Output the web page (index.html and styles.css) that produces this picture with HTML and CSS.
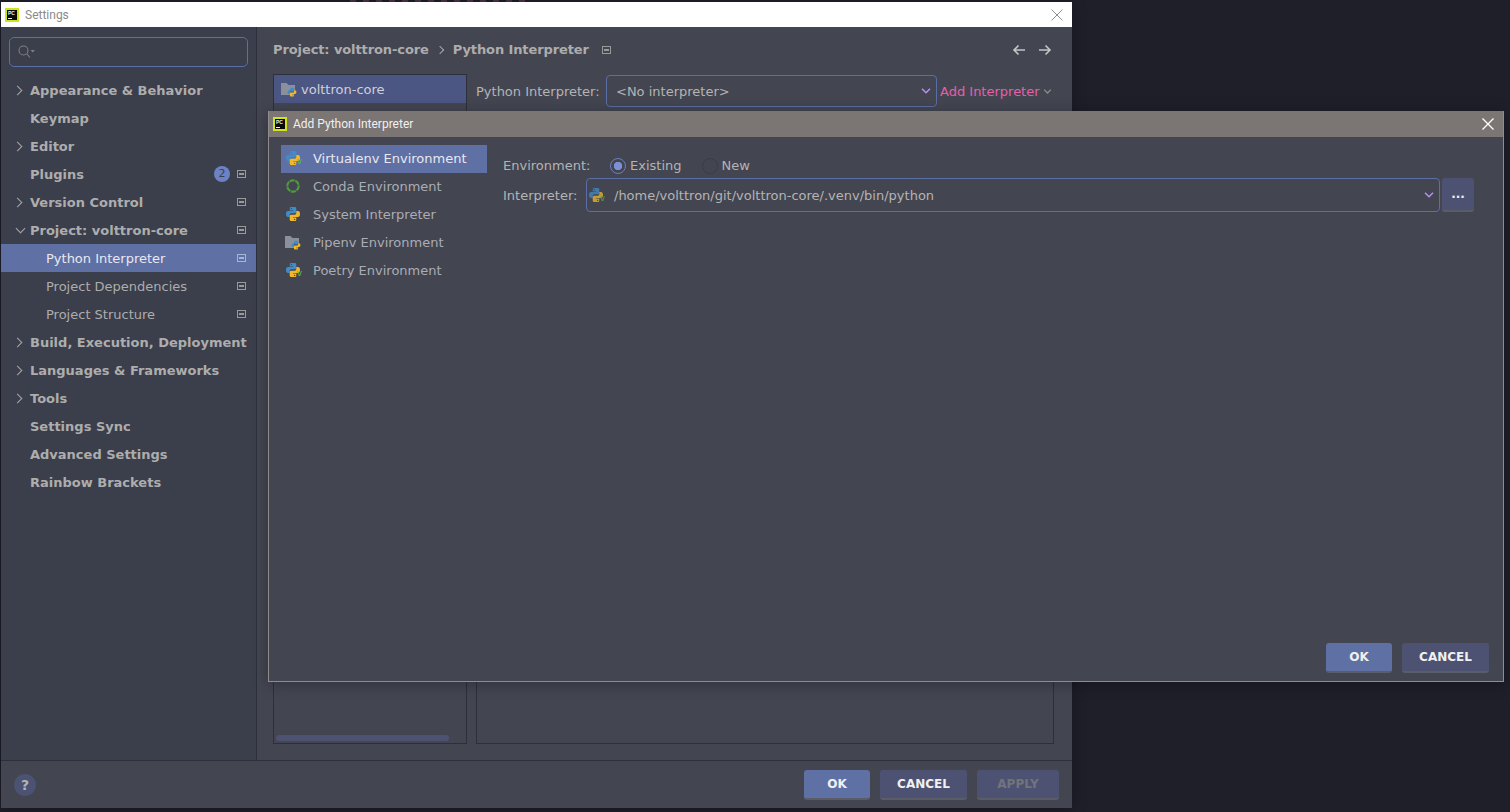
FILE: index.html
```html
<!DOCTYPE html>
<html lang="en">
<head>
    <meta charset="UTF-8">
    <meta name="viewport" content="width=device-width, initial-scale=1.0">
    <title>Settings</title>
    <link rel="stylesheet" href="styles.css">
</head>
<body>
    <svg class="defs" width="0" height="0">
        <symbol id="py" viewBox="0 0 16 16">
            <path id="snake" fill="#3e8cc8" fill-rule="evenodd" d="M6.200 1H9.800C10.700 1 11.300 1.600 11.300 2.500V5.900C11.300 6.700 10.700 7.300 9.900 7.300H6.300C5.400 7.300 4.700 8 4.700 8.900V11H3C1.700 11 1 9.700 1 8 1 6.300 1.700 5 3 5H8V4.400H4.700V2.500C4.700 1.500 5.300 1 6.200 1ZM6.400 1.900A.7 .7 0 1 0 6.410 3.300 .7 .7 0 1 0 6.400 1.900Z"/>
            <path fill="#f2b828" fill-rule="evenodd" transform="rotate(180 8 8)" d="M6.200 1H9.800C10.700 1 11.300 1.600 11.300 2.500V5.900C11.300 6.700 10.700 7.300 9.900 7.300H6.300C5.400 7.300 4.700 8 4.700 8.900V11H3C1.700 11 1 9.700 1 8 1 6.300 1.700 5 3 5H8V4.400H4.700V2.500C4.700 1.500 5.300 1 6.200 1ZM6.400 1.900A.7 .7 0 1 0 6.410 3.300 .7 .7 0 1 0 6.400 1.900Z"/>
        </symbol>
        <symbol id="pyfolder" viewBox="0 0 16 16">
            <path fill="#8a919c" d="M0 2H5.500L7.500 4H14V9H9V14H0Z"/>
            <use href="#py" x="6" y="6" width="10" height="10"/>
        </symbol>
        <symbol id="chevron" viewBox="0 0 10 6">
            <path fill="none" stroke="currentColor" stroke-width="1.500" d="M1 .8L5 4.800L9 .8"/>
        </symbol>
    </svg>

    <div class="bg-scrap"></div>

    <div class="window settings">
        <div class="titlebar light">
            <span class="app-icon"><span class="app-icon-text">PC</span></span>
            <span class="title-text">Settings</span>
            <svg class="close" viewBox="0 0 12 12"><path d="M.5 .5L11.500 11.500M11.500 .5L.5 11.500"/></svg>
        </div>
        <div class="settings-body">
            <aside class="sidebar">
                <div class="search">
                    <svg class="search-icon" viewBox="0 0 18 14"><circle cx="5.500" cy="5.500" r="4.500"/><path d="M9 9L12 12.500"/><path class="fill" d="M12.500 5H17L14.700 7.500Z"/></svg>
                </div>
                <ul class="nav">
                    <li class="nav-row"><span class="arrow right"></span>Appearance &amp; Behavior</li>
                    <li class="nav-row"><span class="arrow"></span>Keymap</li>
                    <li class="nav-row"><span class="arrow right"></span>Editor</li>
                    <li class="nav-row"><span class="arrow"></span>Plugins<span class="badge">2</span><span class="pin"></span></li>
                    <li class="nav-row"><span class="arrow right"></span>Version Control<span class="pin push"></span></li>
                    <li class="nav-row"><span class="arrow down"></span>Project: volttron-core<span class="pin push"></span></li>
                    <li class="nav-row sub selected">Python Interpreter<span class="pin push"></span></li>
                    <li class="nav-row sub">Project Dependencies<span class="pin push"></span></li>
                    <li class="nav-row sub">Project Structure<span class="pin push"></span></li>
                    <li class="nav-row"><span class="arrow right"></span>Build, Execution, Deployment</li>
                    <li class="nav-row"><span class="arrow right"></span>Languages &amp; Frameworks</li>
                    <li class="nav-row"><span class="arrow right"></span>Tools</li>
                    <li class="nav-row"><span class="arrow"></span>Settings Sync</li>
                    <li class="nav-row"><span class="arrow"></span>Advanced Settings</li>
                    <li class="nav-row"><span class="arrow"></span>Rainbow Brackets</li>
                </ul>
            </aside>
            <main class="content">
                <div class="crumbs">
                    <span>Project: volttron-core</span>
                    <span class="crumb-sep"></span>
                    <span>Python Interpreter</span>
                    <span class="pin"></span>
                    <svg class="nav-arrow first" viewBox="0 0 14 12"><path d="M13 6H2M6.500 1.500L2 6L6.500 10.500"/></svg>
                    <svg class="nav-arrow" viewBox="0 0 14 12"><path d="M1 6H12M7.500 1.500L12 6L7.500 10.500"/></svg>
                </div>
                <div class="panes">
                    <div class="tree">
                        <div class="tree-row"><svg class="icon"><use href="#pyfolder"/></svg>volttron-core</div>
                        <div class="tree-scroll"></div>
                    </div>
                    <div class="detail">
                        <div class="detail-top">
                            <span class="detail-label">Python Interpreter:</span>
                            <div class="combo"><span class="combo-text">&lt;No interpreter&gt;</span><svg class="chev"><use href="#chevron"/></svg></div>
                            <span class="add-link">Add Interpreter</span><svg class="chev grey"><use href="#chevron"/></svg>
                        </div>
                        <div class="detail-box"></div>
                    </div>
                </div>
            </main>
        </div>
        <div class="footer">
            <span class="help">?</span>
            <button class="btn primary">OK</button>
            <button class="btn cancel">CANCEL</button>
            <button class="btn disabled">APPLY</button>
        </div>
    </div>

    <div class="window dialog">
        <div class="titlebar taupe">
            <span class="app-icon"><span class="app-icon-text">PC</span></span>
            <span class="dialog-title">Add Python Interpreter</span>
            <svg class="close white" viewBox="0 0 12 12"><path d="M.5 .5L11.500 11.500M11.500 .5L.5 11.500"/></svg>
        </div>
        <div class="dialog-body">
            <ul class="env-list">
                <li class="env-row selected"><span class="icon-wrap"><svg class="icon"><use href="#py"/></svg><span class="v-mark">v</span></span>Virtualenv Environment</li>
                <li class="env-row">
                    <svg class="icon" viewBox="0 0 16 16"><circle cx="8" cy="8" r="5.700" fill="none" stroke="#4f9a3c" stroke-width="2.200" stroke-dasharray="5 .7"/></svg>Conda Environment</li>
                <li class="env-row"><svg class="icon"><use href="#py"/></svg>System Interpreter</li>
                <li class="env-row"><svg class="icon"><use href="#pyfolder"/></svg>Pipenv Environment</li>
                <li class="env-row"><span class="icon-wrap"><svg class="icon"><use href="#py"/></svg><span class="v-mark">v</span></span>Poetry Environment</li>
            </ul>
            <div class="env-form">
                <div class="form-row env-choice">
                    <span class="form-label">Environment:</span>
                    <span class="radio checked"></span><span class="radio-text">Existing</span>
                    <span class="radio"></span><span class="radio-text">New</span>
                </div>
                <div class="form-row">
                    <span class="form-label interp">Interpreter:</span>
                    <div class="combo path">
                        <span class="icon-wrap dim"><svg class="icon"><use href="#py"/></svg><span class="v-mark">v</span></span>
                        <span class="path-text">/home/volttron/git/volttron-core/.venv/bin/python</span>
                        <svg class="chev"><use href="#chevron"/></svg>
                    </div>
                    <button class="btn browse">...</button>
                </div>
            </div>
        </div>
        <div class="dialog-actions">
            <button class="btn primary">OK</button>
            <button class="btn cancel">CANCEL</button>
        </div>
    </div>
</body>
</html>
```

FILE: styles.css
```css
* {
    box-sizing: border-box;
}

body {
    margin: 0;
    height: 812px;
    overflow: hidden;
    background-color: #1e1f29;
    font-family: 'DejaVu Sans', sans-serif;
    font-size: 13px;
    color: #b4b4b4;
}

ul {
    margin: 0;
    padding: 0;
    list-style: none;
}

.defs {
    position: absolute;
}

.bg-scrap {
    position: absolute;
    left: 350px;
    top: 0;
    width: 180px;
    height: 2px;
    background: repeating-linear-gradient(90deg, #4a3442 0 6px, #1e1f29 6px 13px);
}

/* windows sit on the desktop */
.window {
    position: absolute;
    display: flex;
    flex-direction: column;
    background-color: #434551;
    box-shadow: 0 2px 14px rgba(0, 0, 0, 0.3);
}

.settings {
    left: 1px;
    top: 2px;
    width: 1071px;
    height: 806px;
}

.dialog {
    left: 268px;
    top: 111px;
    width: 1236px;
    height: 571px;
    border: 1px solid #8f8d8d;
    border-top: none;
}

.titlebar {
    display: flex;
    align-items: center;
    flex-shrink: 0;
    padding: 0 9px 0 4px;
}

.titlebar.light {
    height: 25px;
    background-color: #ffffff;
}

.titlebar.taupe {
    height: 26px;
    background-color: #7b7573;
}

.app-icon {
    position: relative;
    width: 14px;
    height: 14px;
    margin-right: 6px;
    flex-shrink: 0;
    background-color: #0a0a0a;
    border: 2px solid #cfe31e;
}

.app-icon::after {
    content: "";
    position: absolute;
    left: 1px;
    bottom: 1px;
    width: 4px;
    height: 1px;
    background-color: #eeeeee;
}

.app-icon-text {
    position: absolute;
    left: 1px;
    top: 0;
    font-family: 'Liberation Sans', sans-serif;
    font-size: 5px;
    font-weight: 700;
    line-height: 6px;
    color: #eeeeee;
}

.title-text {
    font-family: Roboto, sans-serif;
    font-size: 12px;
    color: #8a8a8a;
}

.dialog-title {
    font-family: Roboto, sans-serif;
    font-size: 12px;
    color: #f0f0f0;
}

.close {
    width: 12px;
    height: 12px;
    margin-left: auto;
    fill: none;
    stroke: #8e8e8e;
}

.close.white {
    stroke: #ffffff;
    stroke-width: 1.300;
}

.settings-body {
    flex: 1;
    display: flex;
    min-height: 0;
}

.sidebar {
    width: 256px;
    flex-shrink: 0;
    background-color: #3b3e4b;
    border-right: 1px solid #2d2f3b;
    padding-top: 10px;
}

.search {
    display: flex;
    align-items: center;
    height: 30px;
    margin: 0 8px 9px;
    padding-left: 8px;
    border: 1px solid #5c6ea6;
    border-radius: 5px;
}

.search-icon {
    width: 18px;
    height: 14px;
    fill: none;
    stroke: #808080;
    stroke-width: 1.100;
}

.search-icon .fill {
    fill: #808080;
    stroke: none;
}

.nav-row {
    display: flex;
    align-items: center;
    height: 28px;
    font-weight: 700;
    white-space: nowrap;
    color: #adadad;
    padding-right: 10px;
}

.nav-row.sub {
    padding-left: 45px;
    font-weight: 400;
}

.nav-row.selected {
    background-color: #5f70a5;
    color: #e8e8f0;
}

.arrow {
    position: relative;
    width: 29px;
    height: 12px;
    flex-shrink: 0;
}

.arrow.right::before,
.arrow.down::before {
    content: "";
    position: absolute;
    top: 3px;
    width: 6px;
    height: 6px;
    border-top: 1.500px solid #a8a8a8;
    border-right: 1.500px solid #a8a8a8;
    transform: rotate(45deg);
}

.arrow.right::before {
    left: 13px;
}

.arrow.down::before {
    left: 16px;
    top: 1px;
    transform: rotate(135deg);
}

.badge {
    width: 16px;
    height: 16px;
    margin-left: auto;
    margin-right: 7px;
    border-radius: 50%;
    background-color: #6c82c4;
    color: #3b3e4b;
    font-size: 11px;
    font-weight: 400;
    line-height: 16px;
    text-align: center;
}

.pin {
    position: relative;
    flex-shrink: 0;
    width: 9px;
    height: 8px;
    border: 1px solid #9a9a9a;
}

.pin::before {
    content: "";
    position: absolute;
    left: 1px;
    top: 2px;
    width: 5px;
    height: 2px;
    background-color: #9a9a9a;
}

.pin.push {
    margin-left: auto;
}

.selected .pin {
    border-color: #a9b3d4;
}

.selected .pin::before {
    background-color: #a9b3d4;
}

.content {
    flex: 1;
    min-width: 0;
    display: flex;
    flex-direction: column;
    padding: 0 18px 16px 16px;
}

.crumbs {
    display: flex;
    align-items: center;
    height: 47px;
    flex-shrink: 0;
    padding-bottom: 2px;
    font-weight: 700;
    letter-spacing: -0.1px;
    color: #adadad;
}

.crumb-sep {
    width: 6px;
    height: 6px;
    margin: 0 10px 0 8px;
    border-top: 1px solid #a8a8a8;
    border-right: 1px solid #a8a8a8;
    transform: rotate(45deg);
}

.crumbs .pin {
    margin-left: 13px;
}

.nav-arrow {
    width: 14px;
    height: 12px;
    margin-left: 12px;
    margin-right: 2px;
    fill: none;
    stroke: #c4c4c4;
    stroke-width: 1.600;
}

.nav-arrow.first {
    margin-left: auto;
    margin-right: 0;
}

.panes {
    flex: 1;
    display: flex;
    gap: 9px;
    min-height: 0;
}

.tree {
    position: relative;
    width: 194px;
    flex-shrink: 0;
    border: 1px solid #2d2f3b;
}

.tree-row {
    display: flex;
    align-items: center;
    height: 28px;
    background-color: #4c5682;
    color: #d0d0d8;
    padding-left: 7px;
}

.icon {
    width: 16px;
    height: 16px;
    flex-shrink: 0;
}

.tree-row .icon {
    margin-right: 4px;
}

.icon-wrap {
    position: relative;
    display: flex;
    width: 16px;
    height: 16px;
    flex-shrink: 0;
}

.icon-wrap.dim {
    opacity: 0.75;
}

/* small virtualenv mark over the python logo */
.v-mark {
    position: absolute;
    right: -1px;
    bottom: 0;
    font-size: 9px;
    line-height: 9px;
    color: #62b543;
}

/* scrollbar thumb hangs at the bottom of the tree */
.tree-scroll {
    position: absolute;
    left: 2px;
    right: 17px;
    bottom: 2px;
    height: 6px;
    border-radius: 3px;
    background-color: #4d5270;
}

.detail {
    flex: 1;
    min-width: 0;
    display: flex;
    flex-direction: column;
}

.detail-top {
    display: flex;
    align-items: center;
    height: 34px;
    flex-shrink: 0;
}

.detail-label {
    width: 130px;
    flex-shrink: 0;
}

.combo {
    display: flex;
    align-items: center;
    border: 1px solid #5c6ea6;
    border-radius: 4px;
}

.detail-top .combo {
    width: 331px;
    height: 32px;
    flex-shrink: 0;
    padding-left: 9px;
    margin-right: 3px;
}

.combo-text {
    padding-top: 1px;
}

.chev {
    width: 10px;
    height: 6px;
    margin-left: auto;
    margin-right: 5px;
    color: #b890f0;
}

.chev.grey {
    width: 9px;
    height: 5px;
    margin-left: 3px;
    margin-right: 0;
    color: #8e8e8e;
}

.add-link {
    white-space: nowrap;
    color: #e660a8;
}

.detail-box {
    flex: 1;
    margin-top: 6px;
    border: 1px solid #2d2f3b;
}

.footer {
    display: flex;
    align-items: center;
    gap: 10px;
    height: 48px;
    flex-shrink: 0;
    padding: 0 13px;
    border-top: 1px solid #2d2f3b;
}

.help {
    width: 22px;
    height: 22px;
    margin-right: auto;
    border-radius: 50%;
    background-color: #4c5272;
    color: #b4b4b4;
    font-weight: 700;
    font-size: 14px;
    line-height: 22px;
    text-align: center;
}

.btn {
    height: 30px;
    padding: 0 12px;
    border: none;
    border-bottom: 2px solid #5a5c68;
    border-radius: 3px;
    background-color: #4e5272;
    color: #f0f0f0;
    font-family: 'DejaVu Sans', sans-serif;
    font-size: 12px;
    font-weight: 700;
}

.btn.primary {
    width: 66px;
    background-color: #5f70a5;
}

.btn.cancel {
    width: 87px;
}

.btn.disabled {
    width: 82px;
    color: #72747c;
}

.dialog-body {
    flex: 1;
    display: flex;
    min-height: 0;
    padding: 8px 0 0 12px;
}

.env-list {
    width: 206px;
    flex-shrink: 0;
}

.env-row {
    display: flex;
    align-items: center;
    gap: 12px;
    height: 28px;
    padding: 0 0 2px 4px;
    color: #a9adb5;
}

.env-row.selected {
    background-color: #5f70a5;
    color: #e8e8f0;
}

.env-form {
    flex: 1;
    min-width: 0;
    padding: 6px 29px 0 16px;
}

.form-row {
    display: flex;
    align-items: center;
}

.env-choice {
    height: 27px;
    padding-top: 2px;
}

.form-label {
    width: 107px;
    flex-shrink: 0;
}

.form-label.interp {
    width: 83px;
}

.radio {
    width: 16px;
    height: 16px;
    margin-right: 4px;
    border: 1px solid #3a3c48;
    border-radius: 50%;
    flex-shrink: 0;
}

.radio.checked {
    border-color: #6c7fbc;
    background: radial-gradient(circle, #7d90d6 0 4px, transparent 4.500px);
}

.radio-text {
    margin-right: 20px;
}

.combo.path {
    flex: 1;
    min-width: 0;
    height: 34px;
    padding-left: 1px;
}

.path-text {
    margin-left: 10px;
}

.btn.browse {
    width: 32px;
    height: 34px;
    margin-left: 2px;
    padding: 0;
}

.dialog-actions {
    display: flex;
    justify-content: flex-end;
    gap: 10px;
    padding: 0 14px 8px;
    flex-shrink: 0;
}
```
